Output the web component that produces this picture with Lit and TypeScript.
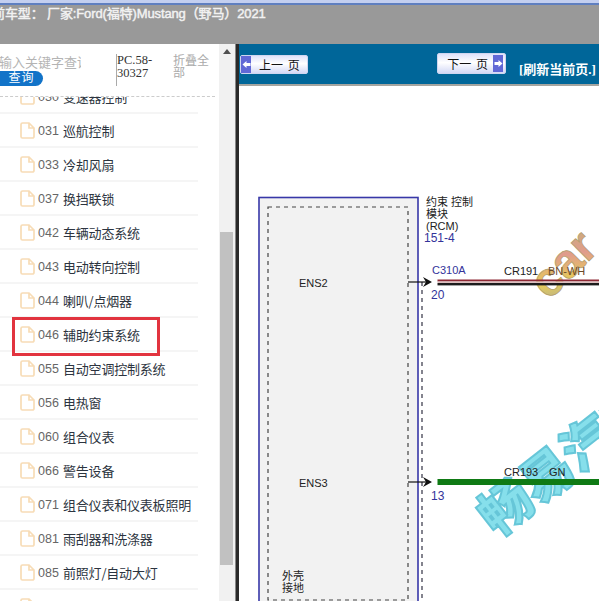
import { LitElement, html, css, svg } from "lit";
import { customElement } from "lit/decorators.js";

const ROWS = [
  ["030", "变速器控制"], ["031", "巡航控制"], ["033", "冷却风扇"], ["037", "换挡联锁"],
  ["042", "车辆动态系统"], ["043", "电动转向控制"], ["044", "喇叭/点烟器"], ["046", "辅助约束系统"],
  ["055", "自动空调控制系统"], ["056", "电热窗"], ["060", "组合仪表"], ["066", "警告设备"],
  ["071", "组合仪表和仪表板照明"], ["081", "雨刮器和洗涤器"], ["085", "前照灯/自动大灯"], ["086", "日间行车灯"],
];

@customElement("app-root")
export class AppRoot extends LitElement {
  static styles = css`
    :host { display: block; width: 599px; height: 601px; overflow: hidden; background: #fff;
      font-family: "Liberation Sans", "Noto Sans CJK SC", sans-serif; }
    .topbar { height: 44px; background: linear-gradient(#c3cff0 0, #c3cff0 3px, #5f7fc0 3px, #5f7fc0 5px, #999 5px); overflow: hidden; padding-top: 5px; box-sizing: border-box; }
    .model { margin: 0 0 0 -8px; font-size: 13px; letter-spacing: -.12px; line-height: 18px; color: #f2f2f2; white-space: nowrap; -webkit-text-stroke: .45px #f2f2f2; }
    .body { display: flex; height: 557px; }
    .side { width: 219px; flex: none; position: relative; overflow: hidden; background: #fff; }
    .tools { height: 53px; margin-right: 4px; border-bottom: 1px dashed #ccc; box-sizing: border-box; display: flex; }
    .search { width: 116px; flex: none; overflow: hidden; }
    .ph { margin: 11px 0 0 -1px; width: 82px; height: 16px; overflow: hidden; font-size: 13px; line-height: 16px; color: #b4b4b4; white-space: nowrap; }
    .go { width: 43px; height: 15px; background: #1273c8; border-radius: 0 8px 8px 0; color: #fff; font-size: 12px; line-height: 15px; text-align: center; letter-spacing: 1px; }
    .pc { width: 57px; flex: none; height: 32px; margin-top: 10px; border-left: 1px solid #aaa; box-sizing: border-box; font-family: "Liberation Serif", serif; font-size: 12.5px; line-height: 13px; color: #333; }
    .fold { width: 36px; margin-top: 11px; font-size: 12px; line-height: 12px; color: #aaa; }
    .list { height: 504px; overflow: hidden; }
    .inner { margin-top: -17px; }
    .row { height: 34px; width: 198px; box-sizing: border-box; border-bottom: 2px solid #f5f5f5; display: flex; align-items: center; padding-left: 20px; font-size: 13px; letter-spacing: -.2px; color: #2c3440; font-family: "Noto Sans CJK SC", "Liberation Sans", sans-serif; white-space: nowrap; }
    .row svg { flex: none; width: 15px; height: 17px; margin-right: 3px; }
    .num { font-family: "Liberation Sans", sans-serif; color: #666; letter-spacing: .1px; margin-right: 5px; padding-top: 1px; width: 20px; font-size: 12.5px; }
    .mark { position: absolute; left: 12px; top: 273px; width: 148px; height: 39px; box-sizing: border-box; border: 3px solid #e2343f; }
    .bar { width: 16px; flex: none; background: #f1f1f1; position: relative; }
    .up { width: 0; height: 0; margin: 5px auto 0; border: 4px solid transparent; border-top: 0; border-bottom: 5px solid #505050; }
    .thumb { position: absolute; left: 1px; right: 2px; top: 188px; height: 333px; background: #c1c1c1; }
    .rule { width: 4px; flex: none; background: #2a2a2a; border-left: 1px solid #888; box-sizing: border-box; }
    .main { flex: 1; min-width: 0; display: flex; flex-direction: column; }
    .nav { height: 40px; flex: none; background: #006699; border-bottom: 2px solid #a5a5a0; display: flex; }
    .btn { box-sizing: border-box; background: linear-gradient(#dfe2fa, #fff 45%, #d4d9f6); border: 1px solid #cfd6f0; border-radius: 2px; display: flex; align-items: center; font-size: 12px; color: #111; font-family: "Noto Sans CJK SC", sans-serif; }
    .tip { width: 10px; height: 17px; flex: none; background: #6168d6; display: flex; align-items: center; justify-content: center; }
    .tip svg { width: 9px; height: 9px; }
    .prev { width: 68px; height: 19px; margin: 11px 0 0 1px; }
    .prev span { margin-left: 8px; word-spacing: 2px; }
    .next { width: 69px; height: 21px; margin: 9px 0 0 129px; justify-content: flex-end; padding-right: 2px; }
    .next span { margin-right: 5px; word-spacing: 2px; }
    .refresh { margin: 18px 0 0 13px; color: #fff; font-family: "Liberation Serif", "Noto Sans CJK SC", serif; font-weight: 700; font-size: 13px; line-height: 16px; white-space: nowrap; }
    .canvas { display: block; width: 360px; }
    .canvas text { font-family: "Liberation Sans", "Noto Sans CJK SC", sans-serif; }
  `;

  private icon() {
    return html`<svg viewBox="0 0 15 17"><path d="M1 2.5a1.5 1.5 0 0 1 1.5-1.5H9L14 6v8.5a1.5 1.5 0 0 1-1.5 1.5h-10A1.5 1.5 0 0 1 1 14.5z M9 1V6h5" fill="#fff" stroke="#f7dcb6" stroke-width="1.7"/></svg>`;
  }

  private arrow(y: number, ox: number, oy: number) {
    const Y = y - oy;
    return svg`
      <line x1=${408 - ox} y1=${Y} x2=${430 - ox} y2=${Y} stroke="#111" stroke-width="1.2"/>
      <path d="M${423 - ox} ${Y - 5}L${432 - ox} ${Y}L${423 - ox} ${Y + 5}L${426 - ox} ${Y}z" fill="#111"/>`;
  }

  private diagram() {
    const ox = 239, oy = 86;
    const t = (x: number, y: number, s: string, fill = "#222", size = 11) =>
      svg`<text x=${x - ox} y=${y - oy} fill=${fill} font-size=${size}>${s}</text>`;
    const lab = "#33339a";
    return html`<svg class="canvas" viewBox="0 0 360 515" width="360" height="515">
      <defs>
        <linearGradient id="car" x1="0" y1="1" x2="1" y2="0">
          <stop offset="0" stop-color="#a8a8a0"/><stop offset=".3" stop-color="#e6cc58"/>
          <stop offset=".6" stop-color="#e09c8c"/><stop offset="1" stop-color="#c0b478"/>
        </linearGradient>
      </defs>
      <rect x=${259 - ox} y=${197.5 - oy} width="159" height="420" fill="#f2f2f2" stroke="#3838a8" stroke-width="1.6"/>
      <rect x=${268 - ox} y=${207 - oy} width="140" height="393" fill="none" stroke="#444" stroke-width="1.2" stroke-dasharray="4 4"/>
      <line x1=${422 - ox} y1=${282 - oy} x2=${422 - ox} y2="520" stroke="#334" stroke-width="1.2" stroke-dasharray="4 4"/>

      <text transform="translate(${549 - ox} ${301 - oy}) rotate(-45)" font-size="48" font-weight="700" fill="url(#car)" stroke="#b09a68" stroke-width=".7">car</text>
      <text transform="translate(${497 - ox} ${538 - oy}) rotate(-38)" font-size="52" font-weight="900" fill="#86dfeb" stroke="#66c6d8" stroke-width="2">畅易汽车</text>

      ${this.arrow(282, ox, oy)}
      <rect x=${437.5 - ox} y=${279.5 - oy} width="162" height="2" fill="#8e2834"/>
      <rect x=${437.5 - ox} y=${281.5 - oy} width="162" height="1.6" fill="#dcc0c0"/>
      <rect x=${437.5 - ox} y=${283 - oy} width="162" height="2.4" fill="#1c1c1c"/>

      ${this.arrow(482, ox, oy)}
      <rect x=${437.5 - ox} y=${479 - oy} width="162" height="6" fill="#0f7a14"/>

      ${t(426, 206, "约束 控制")}
      ${t(426, 218, "模块")}
      ${t(426, 230, "(RCM)")}
      ${t(424, 242, "151-4", lab, 12)}
      ${t(432, 274, "C310A", lab)}
      ${t(431, 299, "20", lab, 12)}
      ${t(504, 275, "CR191")}
      ${t(548, 275, "BN-WH", "#6a4a28")}
      ${t(299, 287, "ENS2")}
      ${t(299, 487, "ENS3")}
      ${t(431, 500, "13", lab, 12)}
      ${t(504, 476, "CR193")}
      ${t(549, 476, "GN")}
      ${t(282, 580, "外壳")}
      ${t(282, 592, "接地")}
    </svg>`;
  }

  render() {
    return html`
      <div class="topbar"><div class="model">前车型： 厂家:Ford(福特)Mustang（野马）2021</div></div>
      <div class="body">
        <div class="side">
          <div class="tools">
            <div class="search"><div class="ph">输入关键字查询</div><div class="go">查询</div></div>
            <div class="pc">PC.58-<br>30327</div>
            <div class="fold">折叠全部</div>
          </div>
          <div class="list"><div class="inner">
            ${ROWS.map(([n, s]) => html`<div class="row">${this.icon()}<span class="num">${n}</span><span>${s}</span></div>`)}
          </div></div>
          <div class="mark"></div>
        </div>
        <div class="bar"><div class="up"></div><div class="thumb"></div></div>
        <div class="rule"></div>
        <div class="main">
          <div class="nav">
            <div class="btn prev">
              <div class="tip"><svg viewBox="0 0 9 9"><path d="M0.5 4.5 4.5 1v2H8.5v3H4.5v2z" fill="#fff"/></svg></div>
              <span>上一 页</span>
            </div>
            <div class="btn next">
              <span>下一 页</span>
              <div class="tip"><svg viewBox="0 0 9 9"><path d="M8.5 4.5 4.5 1v2H.5v3h4v2z" fill="#fff"/></svg></div>
            </div>
            <div class="refresh">[刷新当前页.]</div>
          </div>
          ${this.diagram()}
        </div>
      </div>`;
  }
}
